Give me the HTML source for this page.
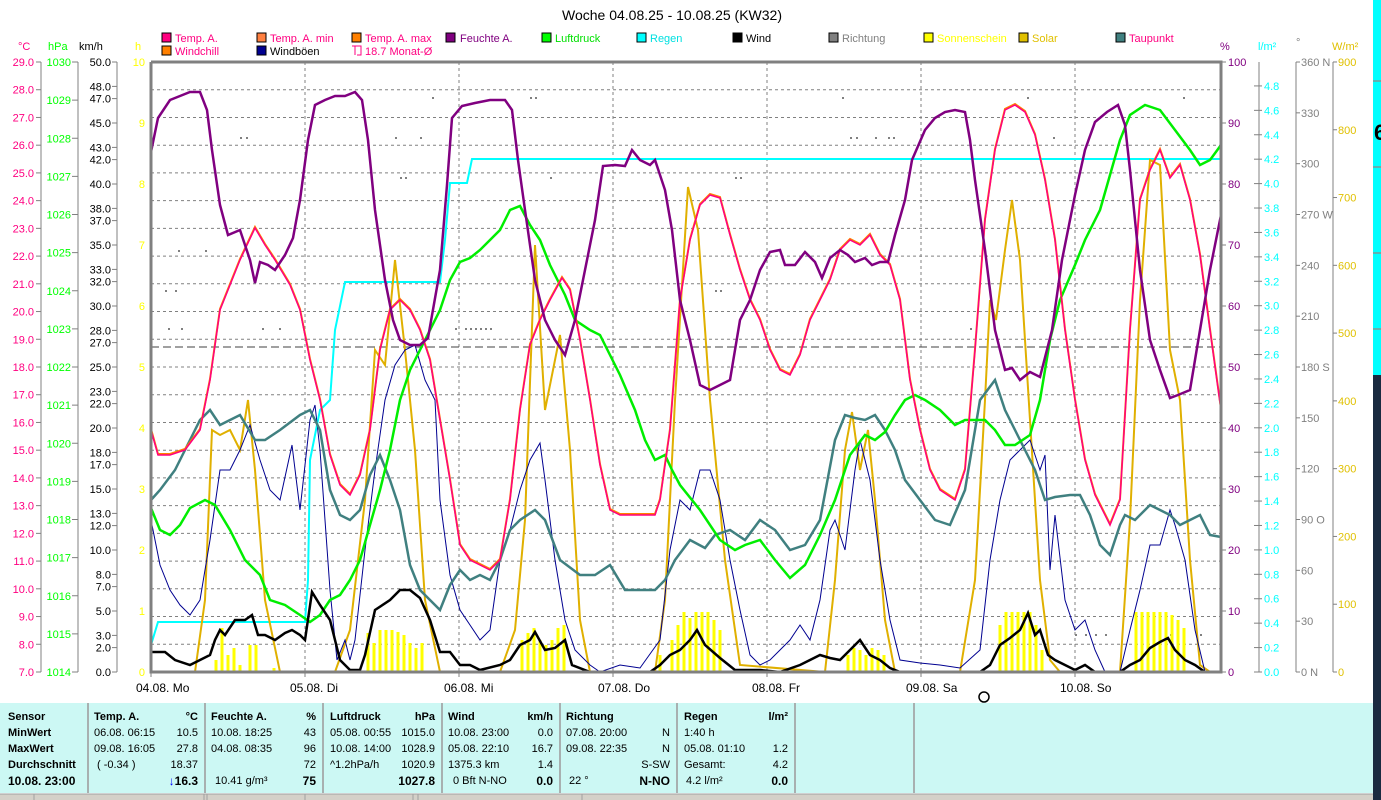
<!DOCTYPE html>
<html><head><meta charset="utf-8"><style>
html,body{margin:0;padding:0;width:1381px;height:800px;overflow:hidden;background:#fff;font-family:"Liberation Sans",sans-serif}
svg{position:absolute;left:0;top:0}
.tbl{position:absolute;left:0;top:703px;width:1373px;height:90px;background:#ccf8f4;font-size:11px;color:#000}
.c{position:absolute;top:0;height:90px;border-right:2px solid #a8b0b0}
.c div{position:absolute;white-space:nowrap;line-height:16px}
.b{font-weight:bold}
</style></head><body>
<svg width="1381" height="800" viewBox="0 0 1381 800" font-family="Liberation Sans, sans-serif" font-size="11">
<rect x="1373" y="0" width="8" height="375" fill="#00ffff"/>
<rect x="1373" y="375" width="8" height="425" fill="#1a2a40"/>
<line x1="1373" y1="81" x2="1381" y2="81" stroke="#c06060"/>
<line x1="1373" y1="167" x2="1381" y2="167" stroke="#c06060"/>
<line x1="1373" y1="253" x2="1381" y2="253" stroke="#c06060"/>
<line x1="1373" y1="329" x2="1381" y2="329" stroke="#c06060"/>
<text x="1374" y="140" font-size="22" font-weight="bold">6</text>
<text x="672" y="20" font-size="14" text-anchor="middle">Woche 04.08.25 - 10.08.25 (KW32)</text>
<g font-size="11">
<rect x="162" y="33" width="9" height="9" fill="#ff0080" stroke="#000"/><text x="175" y="42" fill="#ff0080">Temp. A.</text>
<rect x="257" y="33" width="9" height="9" fill="#ff8040" stroke="#000"/><text x="270" y="42" fill="#ff0080">Temp. A. min</text>
<rect x="352" y="33" width="9" height="9" fill="#ff8000" stroke="#000"/><text x="365" y="42" fill="#ff0080">Temp. A. max</text>
<rect x="446" y="33" width="9" height="9" fill="#800080" stroke="#000"/><text x="460" y="42" fill="#800080">Feuchte A.</text>
<rect x="542" y="33" width="9" height="9" fill="#00ff00" stroke="#000"/><text x="555" y="42" fill="#00e000">Luftdruck</text>
<rect x="637" y="33" width="9" height="9" fill="#00ffff" stroke="#000"/><text x="650" y="42" fill="#00e0e0">Regen</text>
<rect x="733" y="33" width="9" height="9" fill="#000" stroke="#000"/><text x="746" y="42" fill="#000">Wind</text>
<rect x="829" y="33" width="9" height="9" fill="#808080" stroke="#000"/><text x="842" y="42" fill="#808080">Richtung</text>
<rect x="924" y="33" width="9" height="9" fill="#ffff00" stroke="#000"/><text x="937" y="42" fill="#ffff00">Sonnenschein</text>
<rect x="1019" y="33" width="9" height="9" fill="#e0c000" stroke="#000"/><text x="1032" y="42" fill="#e0c000">Solar</text>
<rect x="1116" y="33" width="9" height="9" fill="#408080" stroke="#000"/><text x="1129" y="42" fill="#ff0080">Taupunkt</text>
<rect x="162" y="46" width="9" height="9" fill="#ff8000" stroke="#000"/><text x="175" y="55" fill="#ff0080">Windchill</text>
<rect x="257" y="46" width="9" height="9" fill="#000090" stroke="#000"/><text x="270" y="55" fill="#000">Windböen</text>
<path d="M355 46 V55 M352 46 H361 V55 H357" stroke="#ff0080" fill="none"/><text x="365" y="55" fill="#ff0080">18.7 Monat-Ø</text>
</g>
<g font-size="11">
<text x="18" y="50" fill="#ff0080">°C</text><text x="48" y="50" fill="#00ff00">hPa</text><text x="79" y="50" fill="#000">km/h</text><text x="135" y="50" fill="#ffff00">h</text>
<text x="1220" y="50" fill="#800080">%</text><text x="1258" y="50" fill="#00ffff">l/m²</text><text x="1296" y="46" fill="#808080">°</text><text x="1332" y="50" fill="#e0c000">W/m²</text>
</g>
<g stroke="#808080" fill="none">
<line x1="41" y1="62" x2="41" y2="672"/><line x1="78" y1="62" x2="78" y2="672"/><line x1="117" y1="62" x2="117" y2="672"/>
<line x1="1259" y1="62" x2="1259" y2="672"/><line x1="1296" y1="62" x2="1296" y2="672"/><line x1="1333" y1="62" x2="1333" y2="672"/>
</g>
<g id="axes" font-size="11"></g>
<g stroke="#808080" stroke-dasharray="3,3" fill="none">
<path d="M151 89.7H1221M151 117.5H1221M151 145.2H1221M151 172.9H1221M151 200.6H1221M151 228.4H1221M151 256.1H1221M151 283.8H1221M151 311.5H1221M151 339.3H1221M151 367H1221M151 394.7H1221M151 422.5H1221M151 450.2H1221M151 477.9H1221M151 505.6H1221M151 533.4H1221M151 561.1H1221M151 588.8H1221M151 616.5H1221M151 644.3H1221"/>
<path d="M305 62V672M459 62V672M613 62V672M767 62V672M921 62V672M1075 62V672"/>
</g>
<path d="M151 347H1221" stroke="#404040" stroke-dasharray="8,4" fill="none"/>
<g fill="#808080">
<rect x="432" y="97" width="2" height="2"/><rect x="530" y="97" width="2" height="2"/><rect x="535" y="97" width="2" height="2"/><rect x="842" y="97" width="2" height="2"/><rect x="1027" y="97" width="2" height="2"/><rect x="1183" y="97" width="2" height="2"/>
<rect x="240" y="137" width="2" height="2"/><rect x="246" y="137" width="2" height="2"/><rect x="395" y="137" width="2" height="2"/><rect x="420" y="137" width="2" height="2"/><rect x="850" y="137" width="2" height="2"/><rect x="856" y="137" width="2" height="2"/><rect x="875" y="137" width="2" height="2"/><rect x="888" y="137" width="2" height="2"/><rect x="893" y="137" width="2" height="2"/><rect x="1053" y="137" width="2" height="2"/>
<rect x="400" y="177" width="2" height="2"/><rect x="405" y="177" width="2" height="2"/><rect x="550" y="177" width="2" height="2"/><rect x="735" y="177" width="2" height="2"/><rect x="740" y="177" width="2" height="2"/>
<rect x="178" y="250" width="2" height="2"/><rect x="205" y="250" width="2" height="2"/><rect x="1018" y="250" width="2" height="2"/>
<rect x="165" y="290" width="2" height="2"/><rect x="175" y="290" width="2" height="2"/><rect x="715" y="290" width="2" height="2"/><rect x="720" y="290" width="2" height="2"/>
<rect x="168" y="328" width="2" height="2"/><rect x="181" y="328" width="2" height="2"/><rect x="262" y="328" width="2" height="2"/><rect x="279" y="328" width="2" height="2"/><rect x="455" y="328" width="2" height="2"/><rect x="465" y="328" width="2" height="2"/><rect x="470" y="328" width="2" height="2"/><rect x="475" y="328" width="2" height="2"/><rect x="480" y="328" width="2" height="2"/><rect x="485" y="328" width="2" height="2"/><rect x="490" y="328" width="2" height="2"/><rect x="970" y="328" width="2" height="2"/>
<rect x="1075" y="634" width="2" height="2"/><rect x="1085" y="634" width="2" height="2"/><rect x="1095" y="634" width="2" height="2"/><rect x="1105" y="634" width="2" height="2"/><rect x="1170" y="634" width="2" height="2"/><rect x="1200" y="634" width="2" height="2"/>
</g>
<path fill="none" stroke="#ffff00" stroke-width="3" d="M216 672V660M222 672V628M228 672V655M234 672V648M240 672V665M250 672V645M256 672V645M274 672V668M368 672V633M374 672V643M380 672V630M386 672V630M392 672V630M398 672V632M404 672V635M410 672V643M416 672V648M422 672V643M522 672V640M528 672V633M534 672V628M540 672V640M546 672V645M552 672V640M558 672V628M564 672V625M660 672V655M672 672V640M678 672V625M684 672V612M690 672V618M696 672V612M702 672V612M708 672V612M714 672V620M720 672V630M848 672V655M854 672V648M860 672V650M866 672V655M872 672V648M878 672V650M884 672V655M1000 672V625M1006 672V612M1012 672V612M1018 672V612M1024 672V612M1030 672V612M1036 672V625M1042 672V650M1136 672V612M1142 672V612M1148 672V612M1154 672V612M1160 672V612M1166 672V612M1172 672V615M1178 672V620M1184 672V628"/>
<polyline fill="none" stroke="#00ffff" stroke-width="2" points="151,645 158,622 305,622 308,580 310,460 320,410 330,400 335,330 345,282 440,282 445,240 450,183 467,183 472,159 1221,159"/>
<polyline fill="none" stroke="#e0b000" stroke-width="2" points="151,672 195,672 205,600 212,430 220,435 230,430 240,450 248,400 255,470 265,600 280,672 335,672 350,630 365,500 375,350 385,365 395,260 405,350 415,450 425,600 440,672 500,672 515,630 525,520 535,245 545,410 553,370 560,335 570,450 580,620 590,672 655,672 665,600 675,400 688,187 698,230 710,400 725,560 740,665 825,672 835,580 845,450 852,412 860,470 868,430 875,500 885,620 895,672 960,672 975,580 985,400 990,300 996,320 1005,250 1012,200 1020,260 1030,420 1040,580 1050,660 1060,672 1120,672 1130,520 1140,300 1150,160 1160,165 1170,350 1180,400 1190,560 1200,665 1210,672"/>
<polyline fill="none" stroke="#000090" stroke-width="1" points="151,520 160,565 170,590 180,605 190,615 200,600 210,540 220,470 230,470 240,450 250,425 260,460 270,490 280,500 292,445 300,510 310,420 315,405 320,450 330,590 337,660 345,640 350,660 355,640 365,550 375,470 385,400 395,365 405,350 415,345 425,380 435,400 440,500 450,575 460,610 470,625 480,640 490,630 500,560 510,530 520,490 530,460 540,443 545,480 555,560 565,620 575,650 590,665 600,672 620,665 640,668 660,640 670,550 680,500 690,510 700,470 710,470 720,500 730,560 740,610 750,655 760,665 770,660 780,650 790,640 800,625 810,640 820,600 830,530 835,520 845,550 855,470 860,440 870,480 880,560 890,620 900,660 920,663 940,665 960,668 980,650 990,560 1000,500 1010,460 1020,450 1030,440 1040,470 1045,455 1050,570 1055,515 1065,600 1075,630 1085,620 1095,650 1105,672 1120,672 1130,630 1140,590 1150,545 1160,545 1170,510 1175,525 1185,560 1195,630 1205,672"/>
<polyline fill="none" stroke="#408080" stroke-width="2.5" points="151,500 160,490 175,470 190,440 200,420 210,410 220,425 230,420 240,415 255,440 265,440 280,430 300,415 310,410 320,430 330,490 340,515 350,520 360,510 370,475 380,455 390,480 400,510 410,565 420,590 430,600 440,610 450,585 460,570 470,580 480,575 490,580 500,560 510,530 520,520 535,510 545,520 560,560 580,575 595,575 610,565 625,590 640,590 655,590 665,580 675,560 690,540 705,548 715,535 730,530 745,540 760,520 775,530 790,550 805,545 820,520 835,440 845,415 855,418 865,420 875,415 885,430 895,450 905,480 920,500 935,520 950,525 965,490 980,400 995,380 1005,410 1015,430 1025,450 1035,470 1045,500 1055,497 1070,495 1080,495 1090,515 1100,545 1110,555 1120,525 1125,515 1135,520 1150,505 1160,510 1170,515 1180,525 1190,520 1200,515 1210,535 1221,537"/>
<polyline fill="none" stroke="#00ee00" stroke-width="2.5" points="151,508 160,530 170,535 180,525 190,508 205,500 215,505 230,530 245,560 260,575 270,600 285,605 300,615 310,622 320,615 330,600 340,595 350,580 360,560 370,525 380,490 390,450 400,400 410,370 420,350 440,310 450,280 460,262 470,258 480,250 490,240 500,230 510,210 520,206 530,225 540,240 550,265 565,295 575,320 590,330 600,335 610,355 620,375 635,410 645,440 655,460 665,455 672,470 680,485 700,510 720,540 735,550 745,545 760,540 775,560 790,578 805,565 820,535 835,500 850,455 865,435 875,440 885,432 895,415 905,400 915,395 925,400 940,410 955,425 965,420 985,420 995,430 1005,445 1015,445 1030,435 1040,400 1050,340 1060,300 1075,265 1085,240 1100,210 1110,175 1120,140 1130,115 1145,105 1160,110 1175,130 1190,150 1200,165 1210,160 1221,145"/>
<polyline fill="none" stroke="#ff8000" stroke-width="2" transform="translate(0,-1)" points="151,430 158,455 170,455 185,450 200,430 210,380 220,310 230,285 240,260 255,228 265,245 275,260 290,285 300,310 310,360 320,400 330,455 340,485 350,495 360,475 370,430 380,350 390,310 400,300 410,310 420,330 430,360 440,420 450,480 460,545 470,560 480,565 490,570 500,560 510,500 520,410 530,345 540,320 550,300 562,278 570,290 580,340 590,400 600,465 610,510 620,515 640,515 655,515 660,500 670,430 680,300 690,240 700,205 710,195 720,198 730,235 740,270 750,300 760,320 770,350 780,370 790,375 800,355 810,320 820,300 830,280 840,250 850,240 860,245 870,235 880,255 890,265 900,300 910,380 920,430 930,470 940,490 955,500 965,470 975,350 985,220 995,150 1005,110 1015,105 1025,112 1035,135 1045,180 1055,240 1065,330 1075,400 1085,460 1095,495 1110,525 1120,500 1130,330 1140,200 1150,170 1160,150 1170,178 1180,165 1190,200 1200,255 1210,330 1221,410"/>
<polyline fill="none" stroke="#ff0080" stroke-width="1.5" points="151,430 158,455 170,455 185,450 200,430 210,380 220,310 230,285 240,260 255,228 265,245 275,260 290,285 300,310 310,360 320,400 330,455 340,485 350,495 360,475 370,430 380,350 390,310 400,300 410,310 420,330 430,360 440,420 450,480 460,545 470,560 480,565 490,570 500,560 510,500 520,410 530,345 540,320 550,300 562,278 570,290 580,340 590,400 600,465 610,510 620,515 640,515 655,515 660,500 670,430 680,300 690,240 700,205 710,195 720,198 730,235 740,270 750,300 760,320 770,350 780,370 790,375 800,355 810,320 820,300 830,280 840,250 850,240 860,245 870,235 880,255 890,265 900,300 910,380 920,430 930,470 940,490 955,500 965,470 975,350 985,220 995,150 1005,110 1015,105 1025,112 1035,135 1045,180 1055,240 1065,330 1075,400 1085,460 1095,495 1110,525 1120,500 1130,330 1140,200 1150,170 1160,150 1170,178 1180,165 1190,200 1200,255 1210,330 1221,410"/>
<polyline fill="none" stroke="#800080" stroke-width="2.5" points="151,152 158,118 170,100 180,96 190,92 200,92 207,110 212,150 220,205 228,235 240,230 250,260 255,283 260,262 268,265 275,270 285,255 293,238 300,200 308,140 315,105 325,100 335,96 345,96 355,92 362,100 368,140 375,210 385,280 393,320 400,340 410,345 420,345 428,338 440,270 447,185 452,118 462,106 475,103 490,100 505,100 512,110 518,160 525,210 535,280 545,320 555,340 565,355 575,320 585,270 595,220 603,166 615,165 625,166 632,150 640,160 650,165 655,160 665,190 672,230 680,300 690,340 700,385 710,390 720,385 730,380 740,320 750,300 760,270 770,252 780,250 785,265 795,265 805,252 815,262 822,278 830,258 840,250 848,255 855,262 865,258 872,265 880,262 888,262 895,235 905,200 912,160 925,130 935,118 945,112 955,110 965,112 970,140 975,180 985,250 995,330 1005,370 1012,368 1020,380 1030,372 1040,377 1052,330 1062,260 1075,195 1085,150 1095,122 1107,112 1118,105 1125,125 1130,170 1140,270 1150,340 1160,370 1170,398 1178,395 1190,390 1200,330 1210,270 1221,215"/>
<polyline fill="none" stroke="#000" stroke-width="2.5" points="151,652 165,652 175,660 190,665 200,660 210,655 215,640 220,630 225,635 235,620 245,620 252,615 258,635 265,635 275,640 285,633 292,630 300,635 305,640 312,592 320,605 330,620 340,660 350,670 360,670 365,655 375,610 390,600 400,590 410,590 420,598 430,620 440,652 450,652 460,665 470,665 480,670 500,665 510,660 520,645 530,640 535,632 545,650 555,648 565,640 572,665 590,672 650,672 660,665 670,655 680,650 690,640 697,630 705,645 720,658 735,670 760,670 780,672 800,665 810,660 820,655 830,658 840,660 850,650 860,640 870,655 880,660 890,668 900,672 980,672 990,665 1000,645 1010,638 1020,630 1028,613 1035,635 1040,630 1048,655 1055,660 1065,665 1075,670 1085,665 1095,672 1120,672 1130,665 1140,660 1150,648 1160,642 1168,638 1175,650 1185,660 1195,665 1205,672 1221,672"/>
<path d="M151 62V672H1221V62H151" fill="none" stroke="#808080" stroke-width="3"/>
<g font-size="12" fill="#000">
<text x="136" y="692">04.08.  Mo</text><text x="290" y="692">05.08.  Di</text><text x="444" y="692">06.08.  Mi</text><text x="598" y="692">07.08.  Do</text><text x="752" y="692">08.08.  Fr</text><text x="906" y="692">09.08.  Sa</text><text x="1060" y="692">10.08.  So</text>
</g>
<path d="M151 672v5M305 672v5M459 672v5M613 672v5M767 672v5M921 672v5M1075 672v5" stroke="#808080"/>
<circle cx="984" cy="697" r="5" fill="none" stroke="#000" stroke-width="1.5"/>
<rect x="0" y="794" width="1373" height="6" fill="#d4d0c8"/>
<path d="M0 794H1373M34 794v6M204 794v6M207 794v6M413 794v6M418 794v6M582 794v6M305 794v6" stroke="#a0a0a0"/>
</svg>
<div class="tbl">
<div class="c" style="left:0;width:87px"><div class="b" style="left:8px;top:6px">Sensor</div><div class="b" style="left:8px;top:22px">MinWert</div><div class="b" style="left:8px;top:38px">MaxWert</div><div class="b" style="left:8px;top:54px">Durchschnitt</div><div class="b" style="left:8px;top:70px;font-size:12px">10.08. 23:00</div></div>
<div class="c" style="left:89px;width:115px"><div class="b" style="left:5px;top:6px">Temp. A.</div><div class="b" style="right:6px;top:6px">°C</div><div style="left:5px;top:22px">06.08.  06:15</div><div style="right:6px;top:22px">10.5</div><div style="left:5px;top:38px">09.08.  16:05</div><div style="right:6px;top:38px">27.8</div><div style="left:8px;top:54px">( -0.34 )</div><div style="right:6px;top:54px">18.37</div><div class="b" style="right:6px;top:70px;font-size:12px"><span style="color:#0000ff">↓</span>16.3</div></div>
<div class="c" style="left:206px;width:116px"><div class="b" style="left:5px;top:6px">Feuchte A.</div><div class="b" style="right:6px;top:6px">%</div><div style="left:5px;top:22px">10.08.  18:25</div><div style="right:6px;top:22px">43</div><div style="left:5px;top:38px">04.08.  08:35</div><div style="right:6px;top:38px">96</div><div style="right:6px;top:54px">72</div><div style="left:9px;top:70px">10.41 g/m³</div><div class="b" style="right:6px;top:70px;font-size:12px">75</div></div>
<div class="c" style="left:324px;width:117px"><div class="b" style="left:6px;top:6px">Luftdruck</div><div class="b" style="right:6px;top:6px">hPa</div><div style="left:6px;top:22px">05.08.  00:55</div><div style="right:6px;top:22px">1015.0</div><div style="left:6px;top:38px">10.08.  14:00</div><div style="right:6px;top:38px">1028.9</div><div style="left:6px;top:54px">^1.2hPa/h</div><div style="right:6px;top:54px">1020.9</div><div class="b" style="right:6px;top:70px;font-size:12px">1027.8</div></div>
<div class="c" style="left:443px;width:116px"><div class="b" style="left:5px;top:6px">Wind</div><div class="b" style="right:6px;top:6px">km/h</div><div style="left:5px;top:22px">10.08.  23:00</div><div style="right:6px;top:22px">0.0</div><div style="left:5px;top:38px">05.08.  22:10</div><div style="right:6px;top:38px">16.7</div><div style="left:5px;top:54px">1375.3 km</div><div style="right:6px;top:54px">1.4</div><div style="left:10px;top:70px">0 Bft N-NO</div><div class="b" style="right:6px;top:70px;font-size:12px">0.0</div></div>
<div class="c" style="left:561px;width:115px"><div class="b" style="left:5px;top:6px">Richtung</div><div style="left:5px;top:22px">07.08.  20:00</div><div style="right:6px;top:22px">N</div><div style="left:5px;top:38px">09.08.  22:35</div><div style="right:6px;top:38px">N</div><div style="right:6px;top:54px">S-SW</div><div style="left:8px;top:70px">22 °</div><div class="b" style="right:6px;top:70px;font-size:12px">N-NO</div></div>
<div class="c" style="left:678px;width:116px"><div class="b" style="left:6px;top:6px">Regen</div><div class="b" style="right:6px;top:6px">l/m²</div><div style="left:6px;top:22px">1:40 h</div><div style="left:6px;top:38px">05.08.  01:10</div><div style="right:6px;top:38px">1.2</div><div style="left:6px;top:54px">Gesamt:</div><div style="right:6px;top:54px">4.2</div><div style="left:8px;top:70px">4.2 l/m²</div><div class="b" style="right:6px;top:70px;font-size:12px">0.0</div></div>
<div class="c" style="left:796px;width:117px"></div>
</div>
<script>
(function(){
var g=document.getElementById('axes'),ns='http://www.w3.org/2000/svg',h='';
function t(x,y,s,c,a){h+='<text x="'+x+'" y="'+(y+4)+'" fill="'+c+'" text-anchor="'+(a||'start')+'">'+s+'</text>';}
function k(x1,x2,y){h+='<line x1="'+x1+'" x2="'+x2+'" y1="'+y+'" y2="'+y+'" stroke="#808080"/>';}
for(var v=29;v>=7;v--){var y=62+(29-v)*27.727;t(34,y,v.toFixed(1),'#ff0080','end');k(36,41,y);}
for(var v=1030;v>=1014;v--){var y=62+(1030-v)*38.125;t(71,y,v,'#00ff00','end');k(72,78,y);}
[50,48,47,45,43,42,40,38,37,35,33,32,30,28,27,25,23,22,20,18,17,15,13,12,10,8,7,5,3,2,0].forEach(function(v){var y=672-v*12.2;t(111,y,v.toFixed(1),'#000','end');k(112,117,y);});
for(var v=10;v>=0;v--){var y=672-v*61;t(145,y,v,'#ffff00','end');}
for(var v=100;v>=0;v-=10){var y=672-v*6.1;t(1228,y,v,'#800080');k(1221,1226,y);}
for(var i=0;i<=24;i++){var v=i*0.2,y=672-i*24.42;t(1264,y,v.toFixed(1),'#00ffff');k(1254,1262,y);}
var d={360:' N',270:' W',180:' S',90:' O',0:'  N'};
for(var v=360;v>=0;v-=30){var y=672-v*1.6944;t(1301,y,v+(d[v]||''),'#808080');k(1296,1300,y);}
for(var v=900;v>=0;v-=100){var y=672-v*0.6778;t(1338,y,v,'#e0c000');k(1333,1337,y);}
g.innerHTML=h;
})();
</script>
</body></html>
